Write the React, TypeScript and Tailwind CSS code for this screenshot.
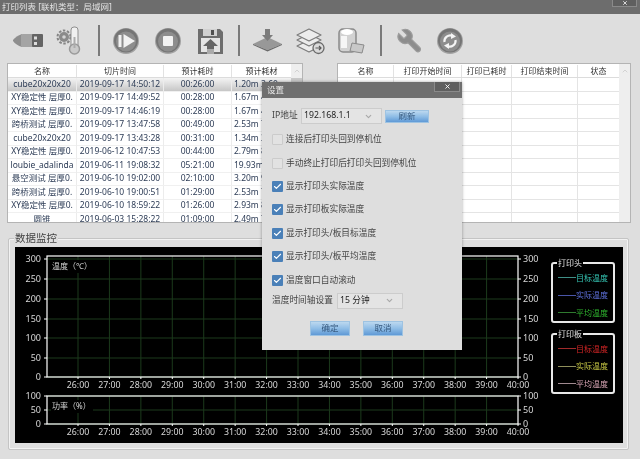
import { Check, ChevronDown, ChevronUp, X } from 'lucide-react'

const leftRows = [
  ['cube20x20x20', '2019-09-17 14:50:12', '00:26:00', '1.20m 3.60g'],
  ['XY稳定性 层厚0.', '2019-09-17 14:49:52', '00:28:00', '1.67m 4.99g'],
  ['XY稳定性 层厚0.', '2019-09-17 14:46:19', '00:28:00', '1.67m 4.99g'],
  ['跨桥测试  层厚0.', '2019-09-17 13:47:58', '00:49:00', '2.53m 7.56g'],
  ['cube20x20x20', '2019-09-17 13:43:28', '00:31:00', '1.34m 3.99g'],
  ['XY稳定性 层厚0.', '2019-06-12 10:47:53', '00:44:00', '2.79m 8.33g'],
  ['loubie_adalinda', '2019-06-11 19:08:32', '05:21:00', '19.93m 59g'],
  ['悬空测试  层厚0.', '2019-06-10 19:02:00', '02:10:00', '3.20m 9.56g'],
  ['跨桥测试  层厚0.', '2019-06-10 19:00:51', '01:29:00', '2.53m 7.56g'],
  ['XY稳定性 层厚0.', '2019-06-10 18:59:22', '01:26:00', '2.93m 8.75g'],
  ['圆锥', '2019-06-03 15:28:22', '01:09:00', '2.49m 7.43g'],
]

const rightCols = ['w-[56px]', 'w-[68px]', 'w-[50px]', 'w-[66px]', 'w-[41px]']
const rightHeads = ['名称', '打印开始时间', '打印已耗时', '打印结束时间', '状态']

const dialogChecks = [
  ['连接后打印头回到停机位', false],
  ['手动终止打印后打印头回到停机位', false],
  ['显示打印头实际温度', true],
  ['显示打印板实际温度', true],
  ['显示打印头/板目标温度', true],
  ['显示打印头/板平均温度', true],
  ['温度窗口自动滚动', true],
] as const

const times = ['26:00', '27:00', '28:00', '29:00', '30:00', '31:00', '32:00', '33:00', '34:00', '35:00', '36:00', '37:00', '38:00', '39:00', '40:00']

function IconBox({ children }: { children: React.ReactNode }) {
  return (
    <svg viewBox="0 0 32 32" className="w-8 h-8 shrink-0">
      {children}
    </svg>
  )
}

function Sep({ className }: { className: string }) {
  return <div className={`w-[2px] h-[31px] mt-[1px] bg-[#7a7a7a] ${className}`} />
}

// round gray button used by play / stop / refresh
function RoundBase() {
  return (
    <>
      <circle cx="16" cy="17" r="13" fill="#a2a2a2" />
      <circle cx="16" cy="16.500" r="12" fill="#757575" />
      <circle cx="16" cy="17.500" r="10" fill="#8d8d8d" />
    </>
  )
}

function Toolbar() {
  return (
    <div className="h-[49px] pt-[10px] pl-[12px] flex items-start">
      {/* usb */}
      <IconBox>
        <path d="M1 16 Q4 12 10 10 V23 Q4 21 1 17 Z" fill="#8e8e8e" />
        <rect x="9" y="10" width="13" height="13" rx="1.500" fill="#a4a4a4" />
        <rect x="20" y="10" width="11" height="13" rx="1" fill="#646464" />
        <rect x="22" y="12.500" width="3" height="3" fill="#dcdcdc" />
        <rect x="22" y="18" width="3" height="3" fill="#dcdcdc" />
      </IconBox>
      {/* thermometer + gear */}
      <div className="ml-[10px]">
        <IconBox>
          <circle cx="10" cy="13" r="6.500" fill="none" stroke="#858585" strokeWidth="2" strokeDasharray="2.500 1.600" />
          <circle cx="10" cy="13" r="5" fill="#8a8a8a" />
          <circle cx="10" cy="13" r="1.800" fill="#d4d4d4" />
          <rect x="17" y="3" width="7" height="22" rx="3" fill="#f0f0f0" stroke="#8f8f8f" />
          <circle cx="20.500" cy="25" r="5" fill="#cacaca" stroke="#9a9a9a" strokeWidth="1.500" />
          <rect x="19.500" y="13" width="2" height="11" fill="#acacac" />
        </IconBox>
      </div>
      <Sep className="ml-[12px] mr-[10px]" />
      {/* play */}
      <IconBox>
        <RoundBase />
        <rect x="8.500" y="11" width="3" height="12" fill="#f2f2f2" />
        <path d="M13.500 10 L25 17 L13.500 24 Z" fill="#f2f2f2" />
      </IconBox>
      {/* stop */}
      <div className="ml-[10px]">
        <IconBox>
          <RoundBase />
          <rect x="11" y="12" width="10" height="10" rx="1" fill="#f2f2f2" />
        </IconBox>
      </div>
      {/* save */}
      <div className="ml-[10px]">
        <IconBox>
          <path d="M4 5 H26 L29 8 V30 H4 Z" fill="#6e6e6e" />
          <rect x="9" y="5" width="14" height="7" fill="#d0d0d0" />
          <rect x="17" y="6" width="3" height="5" fill="#505050" />
          <rect x="7" y="14" width="19" height="14" fill="#e4e4e4" />
          <path d="M16.500 15 L24 22 H20 V25 H13 V22 H9 Z" fill="#666666" />
          <rect x="13" y="25" width="7" height="5" fill="#aaaaaa" />
        </IconBox>
      </div>
      <Sep className="ml-[12px] mr-[12px]" />
      {/* layers down */}
      <IconBox>
        <path d="M1 20 L15.500 13 L30 20 L15.500 26 Z" fill="#989898" />
        <path d="M1 20 L15.500 26 L30 20 V21 L15.500 27.500 L1 21 Z" fill="#6a6a6a" />
        <path d="M13 5 H18 V11 H21 L15.500 17 L10 11 H13 Z" fill="#7c7c7c" />
      </IconBox>
      {/* layers + arrow */}
      <div className="ml-[10px]">
        <IconBox>
          <g fill="#ececec" stroke="#7c7c7c" strokeWidth="1.200" strokeLinejoin="round">
            <path d="M3 22 L15 16 L27 22 L15 28 Z" />
            <path d="M3 16 L15 10 L27 16 L15 22 Z" />
            <path d="M3 11 L15 5 L27 11 L15 17 Z" />
          </g>
          <circle cx="24.500" cy="24" r="5.500" fill="#dadada" stroke="#6a6a6a" strokeWidth="1.300" />
          <path d="M21.500 24 H27 M25 22 L27 24 L25 26" fill="none" stroke="#5a5a5a" strokeWidth="1.200" />
        </IconBox>
      </div>
      {/* database doc */}
      <div className="ml-[10px]">
        <IconBox>
          <rect x="3" y="5" width="17" height="23" rx="4" fill="#d2d2d2" stroke="#8a8a8a" strokeWidth="1.500" />
          <ellipse cx="11" cy="8" rx="6" ry="3" fill="#ffffff" />
          <rect x="5" y="12" width="6" height="12" fill="#f6f6f6" />
          <path d="M16 19 L28 21 L26 29 L14 27 Z" fill="#c8c8c8" stroke="#8a8a8a" />
        </IconBox>
      </div>
      <Sep className="ml-[12px] mr-[10px]" />
      {/* wrench */}
      <IconBox>
        <g transform="translate(32 3) scale(-1.180 1.180)">
          <path
            d="M14.7 6.300a1 1 0 0 0 0 1.400l1.600 1.600a1 1 0 0 0 1.400 0l3.770-3.770a6 6 0 0 1-7.940 7.940l-6.910 6.910a2.120 2.120 0 0 1-3-3l6.910-6.910a6 6 0 0 1 7.940-7.940l-3.760 3.760z"
            fill="#8d8d8d"
            stroke="#9c9c9c"
            strokeWidth="1"
          />
        </g>
      </IconBox>
      {/* refresh */}
      <div className="ml-[10px]">
        <IconBox>
          <RoundBase />
          <path d="M10.500 18 A5.800 5.800 0 0 1 18.500 11.800" fill="none" stroke="#f4f4f4" strokeWidth="2.200" />
          <path d="M21.500 16 A5.800 5.800 0 0 1 13.500 22.200" fill="none" stroke="#f4f4f4" strokeWidth="2.200" />
          <path d="M17 9 L22 12.500 L17 15 Z" fill="#f4f4f4" />
          <path d="M15 25 L10 21.500 L15 19 Z" fill="#f4f4f4" />
        </IconBox>
      </div>
    </div>
  )
}

function Scrollbar({ thumb }: { thumb?: boolean }) {
  return (
    <div className="w-[11px] bg-[#eeeeee] flex flex-col items-center text-[#c4c4c4]">
      <div className="h-[14px] flex items-center">
        <ChevronUp size={8} />
      </div>
      {thumb && <div className="w-full h-[40px] bg-[#c9c9c9]" />}
    </div>
  )
}

function LeftTable() {
  return (
    <div className="w-[296px] h-[160px] border border-[#b4b4b4] bg-white flex overflow-hidden">
      <div className="flex-1 min-w-0 text-[8.500px] text-[#2d3c56]">
        <div className="flex h-[14px] items-center border-b border-[#dcdcdc] text-[8px] text-[#333]">
          <div className="w-[69px] text-center border-r border-[#e2e2e2]">名称</div>
          <div className="w-[87px] text-center border-r border-[#e2e2e2]">切片时间</div>
          <div className="w-[68px] text-center border-r border-[#e2e2e2]">预计耗时</div>
          <div className="flex-1 text-center">预计耗材</div>
        </div>
        {leftRows.map((row, i) => (
          <div
            key={i}
            className={`flex h-[13.500px] items-center border-b border-[#f0f0f0] whitespace-nowrap ${i === 0 ? 'bg-gradient-to-b from-[#f4f4f4] to-[#c6c6c6]' : ''}`}
          >
            <div className="w-[69px] overflow-hidden text-center px-[1px] border-r border-[#ececec]">{row[0]}</div>
            <div className="w-[87px] text-center border-r border-[#ececec]">{row[1]}</div>
            <div className="w-[68px] text-center border-r border-[#ececec]">{row[2]}</div>
            <div className="flex-1 overflow-hidden pl-[2px]">{row[3]}</div>
          </div>
        ))}
      </div>
      <Scrollbar thumb />
    </div>
  )
}

function RightTable() {
  return (
    <div className="w-[294px] h-[160px] border border-[#b4b4b4] bg-white flex overflow-hidden">
      <div className="flex-1 min-w-0 text-[8px] text-[#333]">
        <div className="flex h-[14px] items-center border-b border-[#dcdcdc]">
          {rightHeads.map((h, i) => (
            <div key={h} className={`${rightCols[i]} text-center whitespace-nowrap ${i < 4 ? 'border-r border-[#e2e2e2]' : ''}`}>
              {h}
            </div>
          ))}
        </div>
        {leftRows.map((_, i) => (
          <div key={i} className="flex h-[13.500px] border-b border-[#e4e4e4]">
            {rightCols.map((c, j) => (
              <div key={j} className={`${c} ${j < 4 ? 'border-r border-[#e4e4e4]' : ''}`} />
            ))}
          </div>
        ))}
      </div>
      <Scrollbar />
    </div>
  )
}

function Plot({ top, height, yTicks, label }: { top: number; height: number; yTicks: [string, number][]; label: string }) {
  const x0 = 32
  const x1 = 503
  const bottom = top + height
  return (
    <g>
      {yTicks.map(([t, y]) => (
        <g key={t}>
          <line x1={x0} x2={x1} y1={y} y2={y} stroke="#1c3a1c" />
          <line x1={x0 - 3} x2={x0} y1={y} y2={y} stroke="#ffffff" />
          <line x1={x1} x2={x1 + 3} y1={y} y2={y} stroke="#ffffff" />
          <text x={x0 - 6} y={y + 3} textAnchor="end" fontSize="9" fill="#d8d8d8">{t}</text>
          <text x={x1 + 5} y={y + 3} fontSize="9" fill="#d8d8d8">{t}</text>
        </g>
      ))}
      {times.map((t, i) => {
        const x = 63 + i * 31.430
        return (
          <g key={t}>
            {i < 14 && <line x1={x} x2={x} y1={top} y2={bottom} stroke="#1c3a1c" />}
            <line x1={x} x2={x} y1={bottom} y2={bottom + 2} stroke="#ffffff" />
            <text x={x} y={bottom + 11} textAnchor="middle" fontSize="8.800" fill="#d8d8d8">{t}</text>
          </g>
        )
      })}
      <rect x={x0} y={top} width={x1 - x0} height={height} fill="none" stroke="#ffffff" strokeWidth="1.200" />
      <rect x={x0 + 4} y={top + 4} width="42" height="13" fill="#000000" />
      <text x={x0 + 5} y={top + 13} fontSize="8" fill="#d8d8d8">{label}</text>
    </g>
  )
}

function Legend({ title, items }: { title: string; items: [string, string, string][] }) {
  return (
    <div className="relative w-[64px] h-[61px] border-2 border-[#e8e8e8] rounded-[3px] pt-[5px]">
      <div className="absolute left-[4px] top-[-6px] bg-black px-[1px] text-[8px] leading-[10px] text-[#e0e0e0]">{title}</div>
      {items.map(([name, lineColor, textColor]) => (
        <div key={name} className="flex items-center h-[17.500px] pl-[5px]">
          <div className="w-[18px] h-[1px]" style={{ backgroundColor: lineColor }} />
          <div className="text-[8px] whitespace-nowrap" style={{ color: textColor }}>{name}</div>
        </div>
      ))}
    </div>
  )
}

function Monitor() {
  return (
    <div className="relative ml-[8px] mt-[15px] w-[621px] h-[212px] border border-[#c4c4c4] rounded-[2px] shadow-[inset_0_0_0_1px_#f2f2f2] pt-[8px] pl-[6px]">
      <div className="absolute left-[5px] top-[-7px] bg-[#dedede] px-[1px] text-[10.500px] leading-[13px] text-[#444]">数据监控</div>
      <div className="w-[608px] h-[196px] bg-black flex">
        <svg width="530" height="196" className="shrink-0">
          <Plot
            top={9}
            height={121}
            label="温度（℃）"
            yTicks={[['300', 12], ['250', 32], ['200', 52], ['150', 72], ['100', 91], ['50', 111], ['0', 130]]}
          />
          <Plot top={149} height={28} label="功率（%）" yTicks={[['100', 149], ['50', 163], ['0', 177]]} />
        </svg>
        <div className="ml-[6px] pt-[15px] flex flex-col gap-[10px]">
          <Legend
            title="打印头"
            items={[
              ['目标温度', '#3f8f86', '#35c6b4'],
              ['实际温度', '#4a55a8', '#5f72de'],
              ['平均温度', '#2f7a2f', '#2fb52f'],
            ]}
          />
          <Legend
            title="打印板"
            items={[
              ['目标温度', '#a02a2a', '#d42525'],
              ['实际温度', '#8f8f5a', '#c9c945'],
              ['平均温度', '#a08a90', '#dca8b8'],
            ]}
          />
        </div>
      </div>
    </div>
  )
}

function BlueButton({ label, className }: { label: string; className: string }) {
  return (
    <div className={`flex items-center justify-center border border-[#9ec3e2] bg-gradient-to-b from-[#bcd8ef] via-[#8fbde6] to-[#5f99d6] text-[8.500px] text-[#35587e] ${className}`}>
      {label}
    </div>
  )
}

function SelectBox({ value, className }: { value: string; className: string }) {
  return (
    <div className={`flex items-center justify-between border border-[#cccccc] bg-[#e4e4e4] pl-[2px] pr-[8px] text-[#222] ${className}`}>
      <span>{value}</span>
      <ChevronDown size={9} className="text-[#a8a8a8]" strokeWidth={3} />
    </div>
  )
}

function SettingsDialog() {
  return (
    <div className="absolute left-[262px] top-[82px] w-[200px] h-[268px] bg-[#dedede] text-[8.700px] text-[#444] shadow-[0_0_3px_rgba(0,0,0,0.35)]">
      <div className="relative h-[16px] bg-[#6f6f6f] pl-[5px] flex items-center text-[8.500px] text-[#e8e8e8]">
        设置
        <div className="absolute right-[2px] top-0 w-[26px] h-[10px] bg-[#5f5f5f] border-x border-b border-[#8a8a8a] flex items-center justify-center text-white">
          <X size={7} strokeWidth={3} />
        </div>
      </div>
      <div className="pt-[10px] px-[10px]">
        <div className="flex items-center h-[16px]">
          <span className="w-[29px] whitespace-nowrap">IP地址</span>
          <SelectBox value="192.168.1.1" className="w-[81px] h-[16px]" />
          <BlueButton label="刷新" className="ml-[3px] w-[44px] h-[13px]" />
        </div>
        <div className="mt-[4px] flex flex-col">
          {dialogChecks.map(([label, checked]) => (
            <div key={label} className="flex items-center h-[23.400px] whitespace-nowrap">
              <div className={`w-[11px] h-[11px] mr-[3px] rounded-[1px] flex items-center justify-center ${checked ? 'bg-[#4a80b8]' : 'border border-[#cbcbcb] bg-[#e2e2e2]'}`}>
                {checked && <Check size={9} strokeWidth={3} className="text-white" />}
              </div>
              {label}
            </div>
          ))}
        </div>
        <div className="mt-[1px] flex items-center h-[16px]">
          <span className="w-[65px] whitespace-nowrap">温度时间轴设置</span>
          <SelectBox value="15 分钟" className="w-[66px] h-[16px]" />
        </div>
        <div className="mt-[12px] ml-[38px] flex gap-[13px]">
          <BlueButton label="确定" className="w-[40px] h-[15px]" />
          <BlueButton label="取消" className="w-[40px] h-[15px]" />
        </div>
      </div>
    </div>
  )
}

export default function App() {
  return (
    <div className="relative w-[640px] h-[459px] overflow-hidden bg-[#dedede] font-['Noto_Sans','Noto_Sans_CJK_SC',sans-serif] blur-[0.4px]">
      <div className="relative h-[14px] bg-[#6d6d6d] pl-[2px] flex items-center text-[8.500px] text-[#e4e4e4]">
        打印列表 [联机类型：局域网]
        <div className="absolute right-[3px] top-0 w-[25px] h-[7px] bg-[#5f5f5f] border-x border-b border-[#8a8a8a] flex items-center justify-center text-white">
          <X size={6} strokeWidth={3} />
        </div>
      </div>
      <Toolbar />
      <div className="pl-[7px] flex gap-[34px]">
        <LeftTable />
        <RightTable />
      </div>
      <Monitor />
      <SettingsDialog />
    </div>
  )
}
